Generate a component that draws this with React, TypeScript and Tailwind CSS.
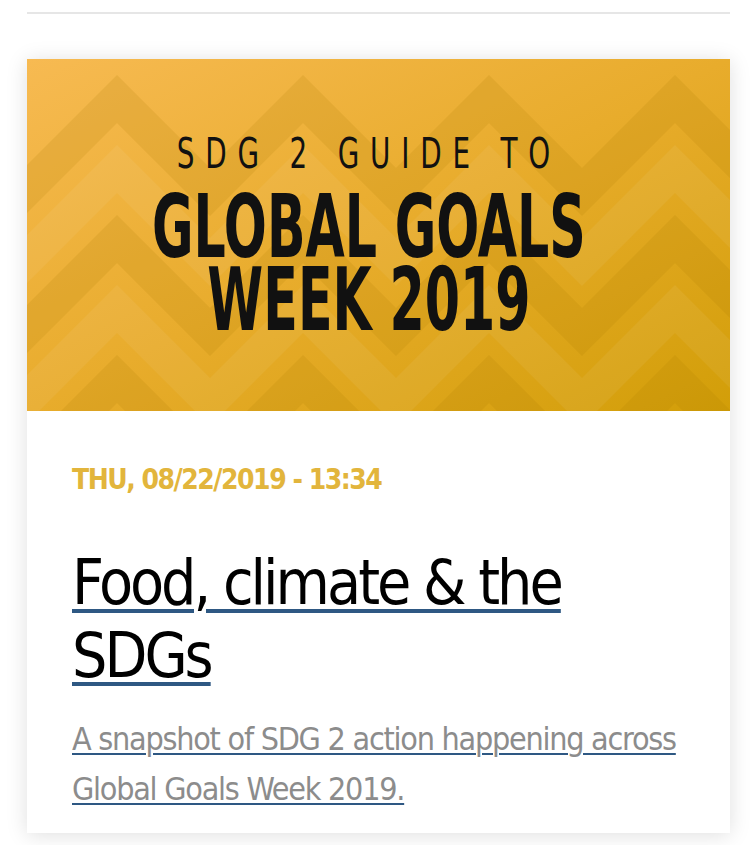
import React from "react";

const cond = { fontFamily: '"DejaVu Sans Condensed", "Liberation Sans Narrow", "Liberation Sans", sans-serif' };

function Banner() {
  // zigzag stripes sitting on the gold gradient
  const rows = [40, 110, 180, 250, 320, 390];
  const zig = (y: number) => {
    const pts: string[] = [];
    for (let i = -2; i < 8; i++) {
      const x = i * 186 + 90;
      pts.push(`${x - 93},${y + 93}`, `${x},${y}`);
    }
    return pts.join(" ");
  };
  return (
    <div className="relative h-[352px] w-full overflow-hidden">
      <svg className="absolute inset-0" width="703" height="352" viewBox="0 0 703 352">
        <defs>
          <linearGradient id="gold" x1="0" y1="0" x2="1" y2="1">
            <stop offset="0" stopColor="#f7ba52" />
            <stop offset="0.5" stopColor="#e8ac2c" />
            <stop offset="1" stopColor="#d29e08" />
          </linearGradient>
        </defs>
        <rect width="703" height="352" fill="url(#gold)" />
        {rows.map((y, i) => (
          <polyline
            key={y}
            points={zig(y)}
            fill="none"
            stroke={i % 2 ? "#ffffff" : "#a87a00"}
            strokeOpacity={i % 2 ? 0.06 : 0.15}
            strokeWidth="34"
          />
        ))}
      </svg>
      <div className="relative flex h-full flex-col items-center pt-[70px] pr-[20px] text-[#111]" style={cond}>
        <div className="origin-center scale-x-[0.72] text-[43px] leading-[48px] tracking-[15px] whitespace-nowrap">SDG 2 GUIDE TO</div>
        <div className="mt-[13px] origin-center scale-x-[0.64] text-center text-[88px] leading-[73px] font-bold whitespace-nowrap">
          GLOBAL GOALS
          <br />
          WEEK 2019
        </div>
      </div>
    </div>
  );
}

export default function App() {
  return (
    <div className="min-h-[845px] bg-white pt-[12px]">
      <div className="ml-[27px] w-[703px]">
        <div className="h-[2px] bg-[#e6e6e6]" />
        <div className="mt-[45px] bg-white shadow-[0_2px_20px_rgba(0,0,0,0.13)]">
          <Banner />
          <div className="px-[45px] pt-[51px] pb-[19px]" style={cond}>
            <div className="text-[28px] font-bold leading-[36px] tracking-[-1.5px] text-[#e2b53c]">THU, 08/22/2019 - 13:34</div>
            <a href="#" className="mt-[48px] block text-[62px] leading-[73px] tracking-[-3px] text-black underline decoration-[#2e5883] decoration-[4px] underline-offset-[5px]">
              Food, climate &amp; the SDGs
            </a>
            <a href="#" className="mt-[22px] block text-[32px] leading-[50px] tracking-[-1.25px] text-[#8c8c8c] underline decoration-[#2e5883] decoration-[2px] underline-offset-[3px]">
              A snapshot of SDG 2 action happening across Global Goals Week 2019.
            </a>
          </div>
        </div>
      </div>
    </div>
  );
}
